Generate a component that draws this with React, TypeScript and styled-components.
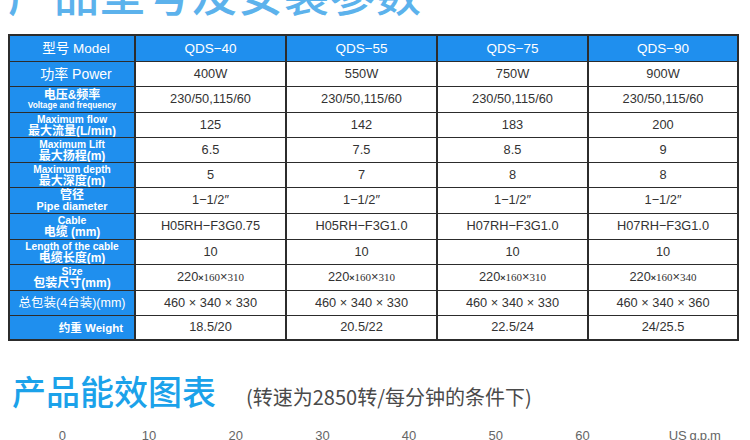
import React from "react";
import styled, { createGlobalStyle } from "styled-components";

const GlobalStyle = createGlobalStyle`
  html, body { margin: 0; padding: 0; background: #fff; }
  body { font-family: "Liberation Sans", "Noto Sans CJK SC", sans-serif; }
`;

const SANS = `"Liberation Sans", "Noto Sans CJK SC", sans-serif`;
const CJK = `"Noto Sans CJK SC", "Liberation Sans", sans-serif`;
const BLUE = "#1f8fee";
const LINE = "#2c2c2c";

const Page = styled.div`
  width: 750px;
  height: 440px;
  overflow: hidden;
  background: #fff;
  display: flex;
  flex-direction: column;
  & > * {
    flex-shrink: 0;
  }
`;

const TitleBar = styled.div`
  height: 34px;
  padding-left: 8px;
`;

const PageTitle = styled.h1`
  margin: -30px 0 0 0;
  font-family: ${CJK};
  font-size: 45px;
  font-weight: 500;
  line-height: 1;
  letter-spacing: 1px;
  color: #5cb2ec;
  white-space: nowrap;
`;

const SpecGrid = styled.div`
  margin-left: 8px;
  width: 731px;
  box-sizing: border-box;
  display: grid;
  grid-template-columns: 124px 149px 149px 149px 148px;
  grid-template-rows: 25px 24px 25px 24px 24px 24px 25px 25px 24px 25px 24px 23px;
  column-gap: 2px;
  row-gap: 1px;
  border: 2px solid ${LINE};
  background: ${LINE};
`;

const Cell = styled.div<{ $head?: boolean; $indent?: number }>`
  display: flex;
  flex-direction: column;
  align-items: center;
  justify-content: center;
  text-align: center;
  white-space: nowrap;
  overflow: hidden;
  background: ${(p) => (p.$head ? BLUE : "#fff")};
  color: ${(p) => (p.$head ? "#fff" : "#333")};
  font-family: ${SANS};
  font-size: 12.8px;
  line-height: 1;
  padding-left: ${(p) => p.$indent ?? 0}px;
`;

const ModelName = styled.span`
  font-size: 13.5px;
  color: #fff;
`;

const LabelLine = styled.span<{ $size: number; $bold?: boolean }>`
  display: block;
  font-size: ${(p) => p.$size}px;
  font-weight: ${(p) => (p.$bold ? 700 : 400)};
  line-height: ${(p) => Math.ceil(p.$size)}px;
`;

const SmallTimes = styled.span`
  font-size: 9px;
  font-weight: bold;
`;

const SerifNum = styled.span`
  font-family: "Liberation Serif", serif;
  font-size: 11px;
`;

const ChartHeading = styled.div`
  margin-top: 33px;
  padding-left: 12px;
  display: flex;
  align-items: baseline;
  gap: 30px;
`;

const ChartTitle = styled.h2`
  margin: 0;
  font-family: ${CJK};
  font-size: 34px;
  font-weight: 500;
  line-height: 1;
  color: #1ba2ea;
`;

const ChartNote = styled.span`
  font-family: ${CJK};
  font-size: 20px;
  line-height: 1;
  color: #4a4a4a;
`;

const AxisRow = styled.div`
  margin-top: 20px;
  padding-left: 19px;
  display: grid;
  grid-template-columns: repeat(7, 86.7px) auto;
  font-family: ${SANS};
  font-size: 13px;
  line-height: 15px;
  color: #666;
`;

const Tick = styled.span`
  text-align: center;
`;

const Unit = styled.span`
  padding-left: 43px;
  letter-spacing: -0.3px;
`;

type Line = { text: string; size: number; bold?: boolean };
type Label = { lines: Line[]; indent?: number };

const two = (a: Line, b: Line): Label => ({
  lines: [
    { ...a, bold: true },
    { ...b, bold: true },
  ],
});

const rows: { label: Label; values: React.ReactNode[] }[] = [
  {
    label: { lines: [{ text: "功率 Power", size: 14 }], indent: 8 },
    values: ["400W", "550W", "750W", "900W"],
  },
  {
    label: two({ text: "电压&频率", size: 12 }, { text: "Voltage and frequency", size: 8.3 }),
    values: Array(4).fill("230/50,115/60"),
  },
  {
    label: two({ text: "Maximum flow", size: 10.2 }, { text: "最大流量(L/min)", size: 12 }),
    values: ["125", "142", "183", "200"],
  },
  {
    label: two({ text: "Maximum Lift", size: 10.2 }, { text: "最大扬程(m)", size: 12 }),
    values: ["6.5", "7.5", "8.5", "9"],
  },
  {
    label: two({ text: "Maximum depth", size: 10.2 }, { text: "最大深度(m)", size: 12 }),
    values: ["5", "7", "8", "8"],
  },
  {
    label: two({ text: "管径", size: 12 }, { text: "Pipe diameter", size: 10.8 }),
    values: Array(4).fill("1−1/2″"),
  },
  {
    label: two({ text: "Cable", size: 10.5 }, { text: "电缆 (mm)", size: 12 }),
    values: ["H05RH−F3G0.75", "H05RH−F3G1.0", "H07RH−F3G1.0", "H07RH−F3G1.0"],
  },
  {
    label: two({ text: "Length of the cable", size: 10.2 }, { text: "电缆长度(m)", size: 12 }),
    values: Array(4).fill("10"),
  },
  {
    label: two({ text: "Size", size: 10.5 }, { text: "包装尺寸(mm)", size: 12 }),
    values: ["310", "310", "310", "340"].map((last, i) => (
      <span key={i}>
        220<SmallTimes>×</SmallTimes>
        <SerifNum>160</SerifNum>×<SerifNum>{last}</SerifNum>
      </span>
    )),
  },
  {
    label: { lines: [{ text: "总包装(4台装)(mm)", size: 12.5 }] },
    values: [
      "460 × 340 × 330",
      "460 × 340 × 330",
      "460 × 340 × 330",
      "460 × 340 × 360",
    ],
  },
  {
    label: { lines: [{ text: "约重 Weight", size: 11.5, bold: true }], indent: 38 },
    values: ["18.5/20", "20.5/22", "22.5/24", "24/25.5"],
  },
];

const models = ["QDS-40", "QDS-55", "QDS-75", "QDS-90"].map((m) => m.replace("-", "−"));

export default function App() {
  return (
    <Page>
      <GlobalStyle />
      <TitleBar>
        <PageTitle>产品型号及安装参数</PageTitle>
      </TitleBar>
      <SpecGrid>
        <Cell $head $indent={8}>
          <LabelLine $size={13.5}>型号 Model</LabelLine>
        </Cell>
        {models.map((m) => (
          <Cell $head key={m}>
            <ModelName>{m}</ModelName>
          </Cell>
        ))}
        {rows.map((row, ri) => (
          <React.Fragment key={ri}>
            <Cell $head $indent={row.label.indent}>
              {row.label.lines.map((l, li) => (
                <LabelLine $size={l.size} $bold={l.bold} key={li}>
                  {l.text}
                </LabelLine>
              ))}
            </Cell>
            {row.values.map((v, vi) => (
              <Cell key={vi}>{v}</Cell>
            ))}
          </React.Fragment>
        ))}
      </SpecGrid>
      <ChartHeading>
        <ChartTitle>产品能效图表</ChartTitle>
        <ChartNote>(转速为2850转/每分钟的条件下)</ChartNote>
      </ChartHeading>
      <AxisRow>
        {["0", "10", "20", "30", "40", "50", "60"].map((t) => (
          <Tick key={t}>{t}</Tick>
        ))}
        <Unit>US g.p.m</Unit>
      </AxisRow>
    </Page>
  );
}
